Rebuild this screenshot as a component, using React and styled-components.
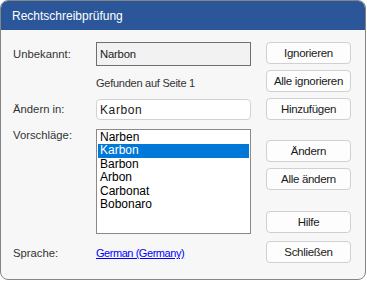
import React from "react";
import styled, { createGlobalStyle } from "styled-components";

const GlobalStyle = createGlobalStyle`
  html, body {
    margin: 0;
    padding: 0;
    background: #ffffff;
  }
  * {
    box-sizing: border-box;
  }
`;

const Window = styled.div`
  width: 366px;
  height: 280px;
  border: 1px solid #858585;
  border-radius: 8px;
  overflow: hidden;
  background: #f7f7f7;
  font-family: "Liberation Sans", Arial, sans-serif;
  display: flex;
  flex-direction: column;
`;

const TitleBar = styled.div`
  height: 29px;
  background: #2b579a;
  color: #ffffff;
  font-size: 12px;
  display: flex;
  align-items: center;
  padding-left: 11px;
  padding-top: 1px;
  flex-shrink: 0;
`;

const Body = styled.div`
  display: flex;
  padding: 12px 14px 0 12px;
  gap: 15px;
`;

const Form = styled.div`
  display: grid;
  grid-template-columns: 83px 155px;
  grid-template-rows: 24px 33px 30px 105px 38px;
  font-size: 11px;
  color: #333333;
`;

const Label = styled.div`
  display: flex;
  align-items: ${(p) => (p.top ? "flex-start" : "center")};
  height: ${(p) => (p.h ? `${p.h}px` : "auto")};
  line-height: 13px;
  font-size: 11.3px;
`;

const Field = styled.div`
  height: ${(p) => p.h}px;
  display: flex;
  align-items: center;
  padding-left: 3px;
  font-size: ${(p) => (p.spaced ? "12px" : "11.3px")};
  letter-spacing: ${(p) => (p.spaced ? "0.6px" : "-0.2px")};
  color: #1a1a1a;
  background: ${(p) => (p.readOnly ? "#f2f2f2" : "#ffffff")};
  border: 1px solid ${(p) => (p.readOnly ? "#6f6f6f" : "#d2d2d2")};
  border-radius: ${(p) => (p.readOnly ? "0" : "4px")};
`;

const Note = styled.div`
  display: flex;
  align-items: center;
  color: #333333;
  letter-spacing: -0.25px;
`;

const ListBox = styled.div`
  border: 1px solid #8a8a8a;
  background: #ffffff;
  padding: 1px;
  font-size: 12px;
  color: #000000;
`;

const ListItem = styled.div`
  height: 13.4px;
  line-height: 13.4px;
  padding-left: 2px;
  background: ${(p) => (p.selected ? "#0078d7" : "transparent")};
  color: ${(p) => (p.selected ? "#ffffff" : "#000000")};
`;

const LinkText = styled.a`
  color: #0000ff;
  text-decoration: underline;
  display: flex;
  align-items: center;
  letter-spacing: -0.45px;
  cursor: pointer;
`;

const Buttons = styled.div`
  display: flex;
  flex-direction: column;
  width: 86px;
`;

const Button = styled.button`
  height: 22px;
  margin-top: ${(p) => p.gap || 0}px;
  background: #fdfdfd;
  border: 1px solid #d0d0d0;
  border-radius: 4px;
  font-family: "Liberation Sans", Arial, sans-serif;
  font-size: 11.5px;
  letter-spacing: -0.3px;
  color: #1a1a1a;
  padding: 0;
`;

const suggestions = ["Narben", "Karbon", "Barbon", "Arbon", "Carbonat", "Bobonaro"];

export default function App() {
  return (
    <>
      <GlobalStyle />
      <Window>
        <TitleBar>Rechtschreibprüfung</TitleBar>
        <Body>
          <Form>
            <Label>Unbekannt:</Label>
            <Field h={24} readOnly>
              Narbon
            </Field>
            <div />
            <Note>Gefunden auf Seite 1</Note>
            <Label top>
              <Label h={21}>Ändern in:</Label>
            </Label>
            <div>
              <Field h={21} spaced>
                Karbon
              </Field>
            </div>
            <Label top>Vorschläge:</Label>
            <ListBox>
              {suggestions.map((s, i) => (
                <ListItem key={s} selected={i === 1}>
                  {s}
                </ListItem>
              ))}
            </ListBox>
            <Label>Sprache:</Label>
            <LinkText>German (Germany)</LinkText>
          </Form>
          <Buttons>
            <Button>Ignorieren</Button>
            <Button gap={6}>Alle ignorieren</Button>
            <Button gap={6}>Hinzufügen</Button>
            <Button gap={20}>Ändern</Button>
            <Button gap={6}>Alle ändern</Button>
            <Button gap={21}>Hilfe</Button>
            <Button gap={8}>Schließen</Button>
          </Buttons>
        </Body>
      </Window>
    </>
  );
}
